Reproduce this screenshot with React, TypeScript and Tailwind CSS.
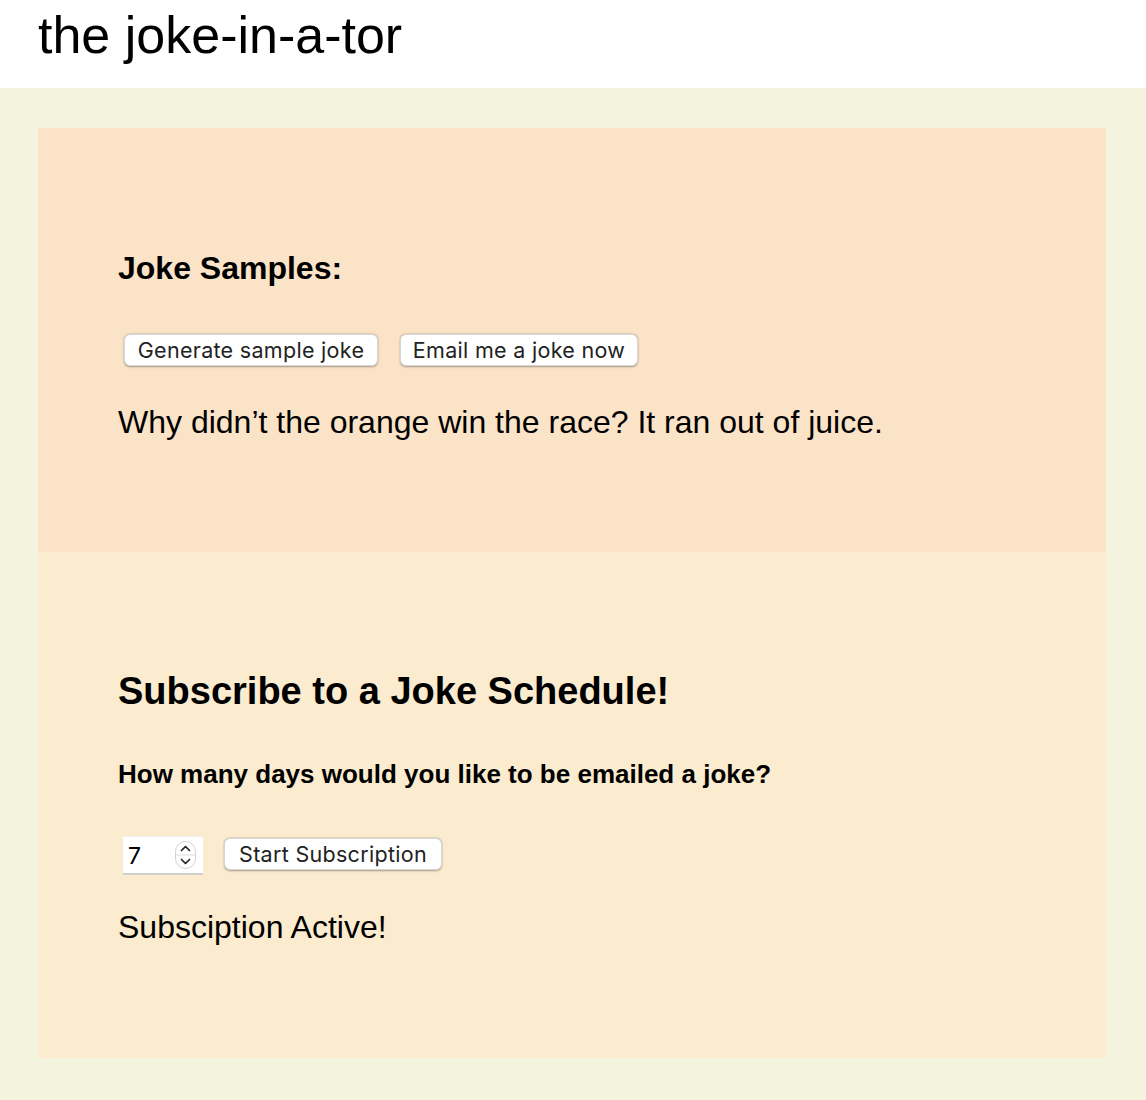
const btn =
  "h-8 rounded-[6px] bg-white text-[21.5px] leading-none text-[#222] tracking-[0.3px] shadow-[0_0.5px_2px_rgba(0,0,0,0.35)] border-[0.5px] border-[#d6d6d6] [font-family:'Inter','Noto_Sans',sans-serif]";

const App = () => {
  return (
    <div className="min-h-[1100px] bg-[#F4F3DE] [font-family:'Liberation_Sans',Arial,sans-serif] text-black">
      {/* HEADER */}
      <header className="h-[88px] bg-white pl-[38px] pt-[5px]">
        <h1 className="text-[52px] leading-[60px] font-normal">the joke-in-a-tor</h1>
      </header>

      <main className="pl-[38px] pr-[40px] pt-[40px] pb-[42px]">
        {/* JOKE SAMPLES */}
        <section className="bg-[#FBE3C7] pl-[80px] pt-[121px] pb-[111px]">
          <h3 className="text-[32px] leading-[38px] font-bold">Joke Samples:</h3>
          <div className="mt-[47px] ml-[6px] flex gap-[22px]">
            <button className={`${btn} w-[254px] pt-[1px]`}>Generate sample joke</button>
            <button className={`${btn} w-[238px] pt-[1px]`}>Email me a joke now</button>
          </div>
          <p className="mt-[37px] text-[32px] leading-[38px]">
            Why didn’t the orange win the race? It ran out of juice.
          </p>
        </section>

        {/* SUBSCRIBE */}
        <section className="bg-[#FBEBCF] pl-[80px] pt-[116px] pb-[112px]">
          <h2 className="text-[38px] leading-[46px] font-bold">Subscribe to a Joke Schedule!</h2>
          <h4 className="mt-[45px] text-[26px] leading-[30px] font-bold">
            How many days would you like to be emailed a joke?
          </h4>
          <div className="mt-[47px] ml-[5px] flex items-start gap-[21px]">
            <div className="flex h-[39px] w-[80px] items-center justify-between bg-white border-b-2 border-[#cfcfcf] pl-[5px] pr-[7px] shadow-[inset_0_1px_0_#f0f0f0]">
              <span className="mt-[4px] text-[23px] leading-none [font-family:'Inter','Noto_Sans',sans-serif]">7</span>
              <svg width="21" height="28" viewBox="0 0 21 28" className="mt-[1px]">
                <rect x="0.5" y="0.5" width="20" height="27" rx="10" fill="#fff" stroke="#d2d2d2" />
                <line x1="1" y1="14" x2="20" y2="14" stroke="#dcdcdc" />
                <path d="M6.5 9.5 L10.5 5.5 L14.5 9.5" fill="none" stroke="#222" strokeWidth="1.7" strokeLinecap="round" strokeLinejoin="round" />
                <path d="M6.5 18.5 L10.5 22.5 L14.5 18.5" fill="none" stroke="#222" strokeWidth="1.7" strokeLinecap="round" strokeLinejoin="round" />
              </svg>
            </div>
            <button className={`${btn} mt-[2px] w-[218px] pt-[1px]`}>Start Subscription</button>
          </div>
          <p className="mt-[33px] text-[32px] leading-[38px]">Subsciption Active!</p>
        </section>
      </main>
    </div>
  );
};

export default App;
